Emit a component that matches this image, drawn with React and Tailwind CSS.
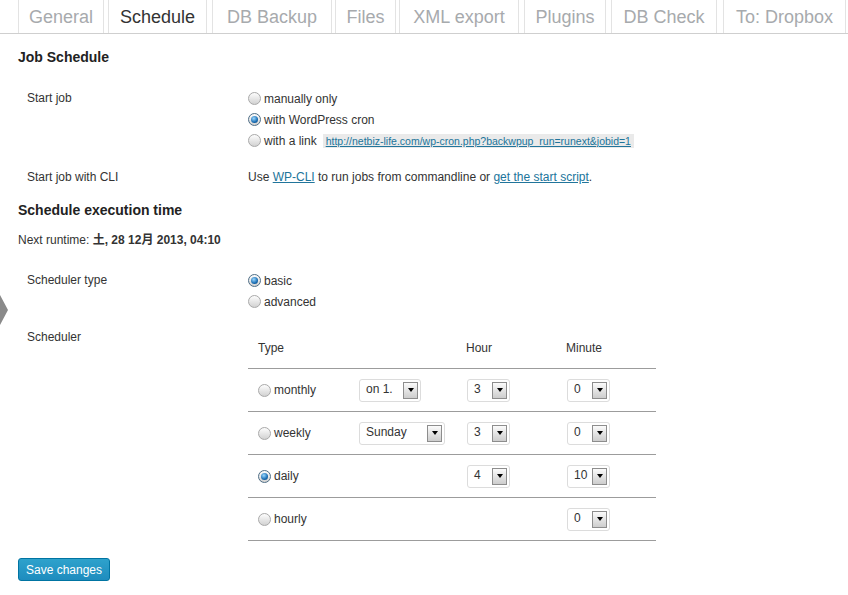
import React from 'react';

const tabs = [
  { label: 'General', cls: 'ml-0 w-[86px]' },
  { label: 'Schedule', cls: 'ml-[4px] w-[99px]', active: true },
  { label: 'DB Backup', cls: 'ml-[5px] w-[120px]' },
  { label: 'Files', cls: 'ml-[3px] w-[61px]' },
  { label: 'XML export', cls: 'ml-[3px] w-[120px]' },
  { label: 'Plugins', cls: 'ml-[5px] w-[82px]' },
  { label: 'DB Check', cls: 'ml-[5px] w-[106px]' },
  { label: 'To: Dropbox', cls: 'ml-[6px] w-[123px]' },
];

const Radio = ({ checked }) => (
  <span
    className={`inline-flex h-[13px] w-[13px] shrink-0 items-center justify-center rounded-full border bg-linear-to-b from-[#fdfdfd] to-[#d2d2d2] ${
      checked ? 'border-[#4f6e86]' : 'border-[#a9a9a9]'
    }`}
  >
    {checked && (
      <span className="h-[7px] w-[7px] rounded-full bg-[radial-gradient(circle_at_40%_35%,#9ad8ff,#1a6db3_60%,#0a3d6c)]" />
    )}
  </span>
);

const RadioRow = ({ checked, children }) => (
  <div className="flex h-[21px] items-center gap-[3px]">
    <Radio checked={checked} />
    {children}
  </div>
);

const Select = ({ value, w }) => (
  <div className={`flex h-[23px] items-center justify-between rounded-[3px] border border-[#dcdcdc] bg-white pl-[6px] pr-[2px] ${w}`}>
    <span className="-mt-[3px]">{value}</span>
    <span className="flex h-[17px] w-[15px] items-center justify-center border border-[#8d8d8d] bg-linear-to-b from-[#fbfbfb] to-[#cdcdcd]">
      <span className="h-0 w-0 border-x-[3.5px] border-t-[4px] border-x-transparent border-t-black" />
    </span>
  </div>
);

const rows = [
  { type: 'monthly', day: <Select value="on 1." w="w-[62px]" />, hour: '3', minute: '0' },
  { type: 'weekly', day: <Select value="Sunday" w="w-[86px]" />, hour: '3', minute: '0' },
  { type: 'daily', checked: true, hour: '4', minute: '10' },
  { type: 'hourly', minute: '0' },
];

const App = () => {
  return (
    <div className="relative h-[595px] w-[848px] overflow-hidden bg-white font-['Liberation_Sans','Noto_Sans_CJK_JP',sans-serif] text-[12px] text-[#333]">
      {/* tabs */}
      <div className="flex h-[34px] border-b border-[#cfcfcf] pl-[18px]">
        {tabs.map((t) => (
          <div
            key={t.label}
            className={`flex h-full items-center justify-center border-x border-[#e3e3e3] pt-[2px] text-[18px] ${t.cls} ${
              t.active ? 'text-[#333]' : 'text-[#a7aaad]'
            }`}
          >
            {t.label}
          </div>
        ))}
      </div>

      <div className="pl-[18px]">
        <h3 className="mt-[15px] text-[14px] font-bold leading-[16px] text-[#222]">Job Schedule</h3>

        <div className="mt-[23px] flex">
          <div className="w-[230px] pl-[9px] leading-[21px]">Start job</div>
          <div>
            <RadioRow>manually only</RadioRow>
            <RadioRow checked>with WordPress cron</RadioRow>
            <RadioRow>
              with a link
              <span className="ml-[3px] bg-[#eaeaea] px-[3px] text-[10.5px] leading-[14px] text-[#21759b] underline">
                http://netbiz-life.com/wp-cron.php?backwpup_run=runext&amp;jobid=1
              </span>
            </RadioRow>
          </div>
        </div>

        <div className="mt-[16px] flex leading-[21px]">
          <div className="w-[230px] pl-[9px]">Start job with CLI</div>
          <div>
            Use <span className="text-[#21759b] underline">WP-CLI</span> to run jobs from commandline or{' '}
            <span className="text-[#21759b] underline">get the start script</span>.
          </div>
        </div>

        <h3 className="mt-[14px] text-[14px] font-bold leading-[16px] text-[#222]">Schedule execution time</h3>

        <div className="mt-[14px] leading-[16px]">
          Next runtime: <span className="font-bold">土, 28 12月 2013, 04:10</span>
        </div>

        <div className="mt-[22px] flex">
          <div className="w-[230px] pl-[9px] leading-[21px]">Scheduler type</div>
          <div>
            <RadioRow checked>basic</RadioRow>
            <RadioRow>advanced</RadioRow>
          </div>
        </div>

        <div className="mt-[18px] flex">
          <div className="w-[230px] pl-[9px] leading-[14px]">Scheduler</div>
          <div className="w-[408px]">
            <div className="grid h-[39px] grid-cols-[101px_108px_100px_99px] border-b border-[#9c9c9c] pt-[11px] leading-[14px]">
              <div className="pl-[10px]">Type</div>
              <div />
              <div className="pl-[9px]">Hour</div>
              <div className="pl-[9px]">Minute</div>
            </div>
            {rows.map((r) => (
              <div
                key={r.type}
                className="grid h-[43px] grid-cols-[101px_108px_100px_99px] items-center border-b border-[#9c9c9c]"
              >
                <div className="flex items-center gap-[3px] pl-[10px]">
                  <Radio checked={r.checked} />
                  {r.type}
                </div>
                <div className="pl-[10px]">{r.day}</div>
                <div className="pl-[10px]">{r.hour && <Select value={r.hour} w="w-[43px]" />}</div>
                <div className="pl-[10px]">{r.minute && <Select value={r.minute} w="w-[43px]" />}</div>
              </div>
            ))}
          </div>
        </div>

        <button className="mt-[17px] h-[23px] w-[92px] rounded-[3px] border border-[#0074a2] bg-linear-to-b from-[#2ea2cc] to-[#1e8cbe] text-[12px] text-white">
          Save changes
        </button>
      </div>

      {/* collapse handle */}
      <div className="absolute left-0 top-[295px] h-0 w-0 border-y-[15px] border-l-[8px] border-y-transparent border-l-[#8a8a8a]" />
    </div>
  );
};

export default App;
